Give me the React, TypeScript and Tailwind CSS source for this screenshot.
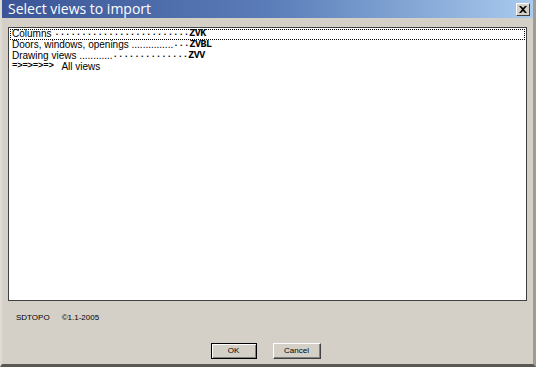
export default function App() {
  return (
    <div className="w-[536px] h-[367px] bg-[#d4d0c8] flex flex-col border-r-[3px] border-b-[3px] border-l-[2px] border-r-[#a09c94] border-b-[#5a5852] border-l-[#dedbd4] overflow-hidden">
      {/* title bar */}
      <div className="h-[18px] flex items-center justify-between bg-gradient-to-r from-[#3b5597] via-[#5a7cb8] to-[#a9cbee] pl-[6px] pr-[3px]">
        <span className="text-white text-[14px] leading-[18px] font-['Open_Sans',sans-serif]">
          Select views to import
        </span>
        <button className="w-[14px] h-[13px] bg-[#d4d0c8] border border-t-white border-l-white border-b-[#404040] border-r-[#404040] flex items-center justify-center">
          <svg width="8" height="7" viewBox="0 0 8 7">
            <path d="M0 0h2l2 2 2-2h2L5 3.5 8 7H6L4 5 2 7H0l3-3.5z" fill="#000" />
          </svg>
        </button>
      </div>

      {/* list */}
      <div className="mx-[6px] mt-[9px] h-[274px] bg-white border border-[#404040] p-[1px] font-['Liberation_Sans',sans-serif] text-[10px] leading-[11px] text-black">
        <div className="h-[11px] pl-[1px] flex items-end whitespace-pre border border-dotted border-black">
          <span>Columns </span>
          <span className="font-['Liberation_Mono',monospace] font-bold text-[9px]">.........................</span>
          <span className="font-['Liberation_Mono',monospace] font-bold text-[10px] tracking-[-0.5px]">ZVK</span>
        </div>
        <div className="h-[11px] pl-[1px] flex items-end whitespace-pre border border-transparent">
          <span>Doors, windows, openings </span>
          <span>...............</span>
          <span className="font-['Liberation_Mono',monospace] font-bold text-[9px]">...</span>
          <span className="font-['Liberation_Mono',monospace] font-bold text-[10px] tracking-[-0.5px]">ZVBL</span>
        </div>
        <div className="h-[11px] pl-[1px] flex items-end whitespace-pre border border-transparent">
          <span>Drawing views </span>
          <span>............</span>
          <span className="font-['Liberation_Mono',monospace] font-bold text-[9px]">..............</span>
          <span className="font-['Liberation_Mono',monospace] font-bold text-[10px] tracking-[-0.5px]">ZVV</span>
        </div>
        <div className="h-[11px] pl-[1px] flex items-end whitespace-pre border border-transparent">
          <span className="font-['Liberation_Mono',monospace] font-bold text-[9px] tracking-[-0.2px]">=&gt;=&gt;=&gt;=&gt;</span>
          <span>{"   All views"}</span>
        </div>
      </div>

      {/* footer text */}
      <div className="h-[34px] flex items-center pl-[14px] gap-[12px] text-[8px] text-black font-['Liberation_Sans',sans-serif]">
        <span>SDTOPO</span>
        <span>©1.1-2005</span>
      </div>

      {/* buttons */}
      <div className="flex justify-center gap-[16px] mt-[8px] pr-[4px]">
        <button className="w-[46px] h-[16px] bg-[#d4d0c8] border border-black shadow-[inset_1px_1px_0_#fff,inset_-1px_-1px_0_#808080] text-[8px] font-['Liberation_Sans',sans-serif] leading-none">
          OK
        </button>
        <button className="w-[48px] h-[16px] bg-[#d4d0c8] border border-t-white border-l-white border-b-[#404040] border-r-[#404040] shadow-[inset_-1px_-1px_0_#808080] text-[8px] font-['Liberation_Sans',sans-serif] leading-none">
          Cancel
        </button>
      </div>
    </div>
  );
}
